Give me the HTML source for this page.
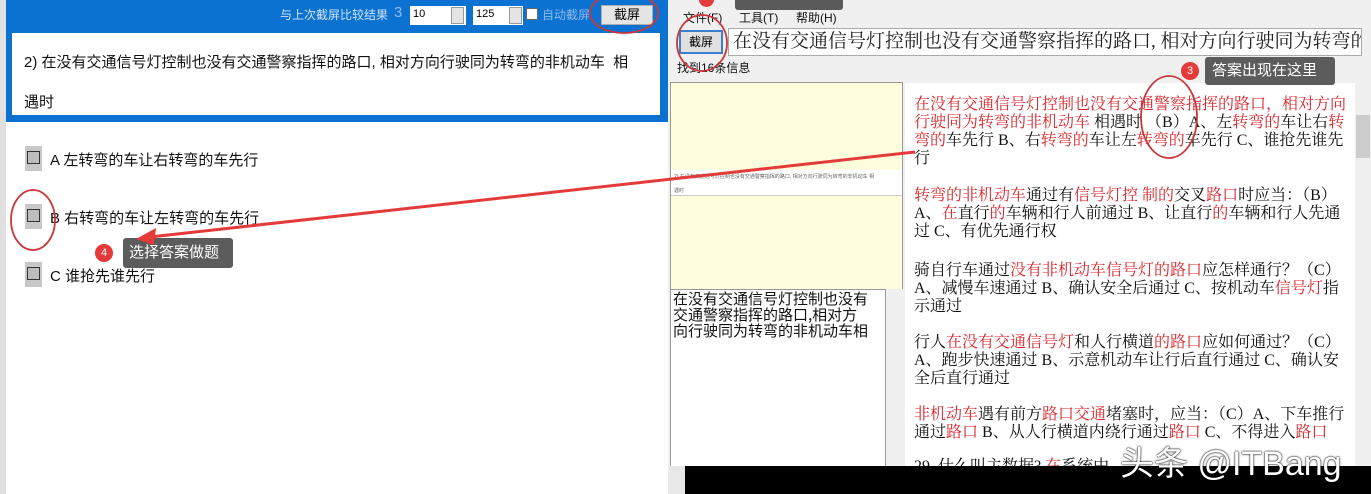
<!DOCTYPE html>
<html><head><meta charset="utf-8"><style>
*{margin:0;padding:0;box-sizing:border-box}
body{width:1371px;height:494px;position:relative;overflow:hidden;background:#fff;font-family:"Liberation Sans","Noto Sans CJK SC",sans-serif}
.a{position:absolute}
.cb{position:absolute;width:17px;height:25px;background:#c8c8c8}
.cb i{position:absolute;left:2px;top:5px;width:13px;height:13px;border:1.5px solid #333;background:#bdbdbd}
.opt{position:absolute;left:50px;font-size:15px;color:#111}
.r{color:#d8262c}
.res{position:absolute;left:914px;width:438px;font-family:"Liberation Serif","Noto Serif CJK SC",serif;font-size:16px;line-height:18px;color:#111}
</style></head><body>
<div class="a" style="left:0;top:0;width:6px;height:494px;background:#e0e0e0"></div>
<div class="a" style="left:6px;top:0;width:662px;height:122px;background:#0b72d2"></div>
<div class="a" style="left:280px;top:6px;font-size:12px;color:#cfe3f7">与上次截屏比较结果</div>
<div class="a" style="left:394px;top:4px;font-size:15px;color:#8fb8e6">3</div>
<div class="a" style="left:410px;top:6px;width:56px;height:19px;background:#fff;font-size:11px;padding:2px 3px">10</div>
<div class="a" style="left:451px;top:7px;width:13px;height:17px;background:#e4e4e4;border:1px solid #999"></div>
<div class="a" style="left:473px;top:6px;width:50px;height:19px;background:#fff;font-size:11px;padding:2px 3px">125</div>
<div class="a" style="left:509px;top:7px;width:13px;height:17px;background:#e4e4e4;border:1px solid #999"></div>
<div class="a" style="left:526px;top:8px;width:12px;height:12px;background:#fff;border:1px solid #666"></div>
<div class="a" style="left:542px;top:6px;font-size:12px;color:#8fb8e6">自动截屏</div>
<div class="a" style="left:601px;top:5px;width:52px;height:20px;background:#e5e5e5;border:1px solid #adadad;font-size:13px;text-align:center;line-height:18px">截屏</div>
<div class="a" style="left:12px;top:33px;width:648px;height:82px;background:#fff"></div>
<div class="a" style="left:24px;top:51px;font-size:15px;color:#111">2) 在没有交通信号灯控制也没有交通警察指挥的路口, 相对方向行驶同为转弯的非机动车&nbsp; 相</div>
<div class="a" style="left:24px;top:91px;font-size:15px;color:#111">遇时</div>
<div class="cb" style="left:25px;top:146px"><i></i></div><div class="opt" style="top:149px">A 左转弯的车让右转弯的车先行</div>
<div class="cb" style="left:25px;top:204px"><i></i></div><div class="opt" style="top:207px">B 右转弯的车让左转弯的车先行</div>
<div class="cb" style="left:25px;top:262px"><i></i></div><div class="opt" style="top:265px">C 谁抢先谁先行</div>
<div class="a" style="left:668px;top:0;width:703px;height:494px;background:#f0f0f0"></div>
<div class="a" style="left:683px;top:9px;font-size:12px;color:#111">文件(F)</div>
<div class="a" style="left:739px;top:9px;font-size:12px;color:#111">工具(T)</div>
<div class="a" style="left:796px;top:9px;font-size:12px;color:#111">帮助(H)</div>
<div class="a" style="left:679px;top:30px;width:44px;height:24px;background:#e1e1e1;border:2px solid #3c7fd0;font-size:12px;text-align:center;line-height:20px">截屏</div>
<div class="a" style="left:728px;top:28px;width:634px;height:28px;background:#fff;border:1px solid #aaa;font-family:'Liberation Serif','Noto Serif CJK SC',serif;font-size:19px;line-height:26px;padding-left:4px;white-space:nowrap;overflow:hidden;color:#222">在没有交通信号灯控制也没有交通警察指挥的路口, 相对方向行驶同为转弯的非</div>
<div class="a" style="left:677px;top:59px;font-size:12px;color:#111">找到16条信息</div>
<div class="a" style="left:670px;top:82px;width:233px;height:208px;background:#fefedc;border:1px solid #999"></div>
<div class="a" style="left:671px;top:170px;width:231px;height:26px;background:#fff;border-bottom:1px solid #ccc"></div>
<div class="a" style="left:674px;top:173px;font-size:5px;color:#666;white-space:nowrap">2) 在没有交通信号灯控制也没有交通警察指挥的路口, 相对方向行驶同为转弯的非机动车 相</div>
<div class="a" style="left:674px;top:187px;font-size:5px;color:#666">遇时</div>
<div class="a" style="left:670px;top:289px;width:216px;height:178px;background:#fff;border:1px solid #999;font-family:'Noto Sans CJK SC',sans-serif;font-size:15px;line-height:16px;padding:1px 14px 1px 2px;color:#111">在没有交通信号灯控制也没有交通警察指挥的路口,相对方向行驶同为转弯的非机动车相</div>
<div class="a" style="left:886px;top:289px;width:18px;height:178px;background:#f0f0f0"></div>
<div class="a" style="left:905px;top:83px;width:450px;height:384px;background:#fff"></div>
<div class="a" style="left:1355px;top:83px;width:16px;height:384px;background:#f0f0f0"></div>
<div class="a" style="left:1356px;top:115px;width:14px;height:43px;background:#cdcdcd"></div>
<div class="res" style="top:96px"><span class="r">在没有交通信号灯控制也没有交通警察指挥的路口，相对方向行驶同为转弯的非机动车</span> 相遇时 （B）A、左<span class="r">转弯的</span>车让右<span class="r">转弯的</span>车先行 B、右<span class="r">转弯的</span>车让左<span class="r">转弯的</span>车先行 C、谁抢先谁先行</div>
<div class="res" style="top:187px"><span class="r">转弯的非机动车</span>通过有<span class="r">信号灯控 制的</span>交叉<span class="r">路口</span>时应当：（B）A、<span class="r">在</span>直行<span class="r">的</span>车辆和行人前通过 B、让直行<span class="r">的</span>车辆和行人先通过 C、有优先通行权</div>
<div class="res" style="top:262px">骑自行车通过<span class="r">没有非机动车信号灯的路口</span>应怎样通行？（C）A、减慢车速通过 B、确认安全后通过 C、按机动车<span class="r">信号灯</span>指示通过</div>
<div class="res" style="top:334px">行人<span class="r">在没有交通信号灯</span>和人行横道<span class="r">的路口</span>应如何通过？（C）A、跑步快速通过 B、示意机动车让行后直行通过 C、确认安全后直行通过</div>
<div class="res" style="top:406px"><span class="r">非机动车</span>遇有前方<span class="r">路口交通</span>堵塞时，应当：（C）A、下车推行通过<span class="r">路口</span> B、从人行横道内绕行通过<span class="r">路口</span> C、不得进入<span class="r">路口</span></div>
<div class="res" style="top:458px">29. 什么叫主数据? <span class="r">在</span>系统中</div>
<div class="a" style="left:668px;top:466px;width:17px;height:28px;background:#e8e8e8"></div>
<div class="a" style="left:685px;top:466px;width:686px;height:28px;background:#000"></div>
<div class="a" style="left:1120px;top:436px;font-size:34px;color:#fff;text-shadow:0 0 2px #000,0 0 1px #000;white-space:nowrap">头条 @ITBang</div>
<div class="a" style="left:735px;top:-12px;width:108px;height:22px;background:#5a5a5a;border-radius:3px"></div>
<div class="a" style="left:699px;top:-8px;width:15px;height:15px;border-radius:50%;background:#e53a3a"></div>
<div class="a" style="left:1205px;top:57px;width:130px;height:28px;background:#5c5c5c;border-radius:3px;color:#fff;font-size:15px;line-height:28px;padding-left:7px">答案出现在这里</div>
<div class="a" style="left:1181px;top:62px;width:18px;height:18px;border-radius:50%;background:#e53a3a;color:#fff;font-size:11px;text-align:center;line-height:18px">3</div>
<div class="a" style="left:123px;top:238px;width:110px;height:30px;background:#5c5c5c;border-radius:3px;color:#fff;font-size:15px;line-height:30px;padding-left:6px">选择答案做题</div>
<div class="a" style="left:95px;top:244px;width:18px;height:18px;border-radius:50%;background:#e53a3a;color:#fff;font-size:11px;text-align:center;line-height:18px">4</div>
<svg class="a" style="left:0;top:0" width="1371" height="494">
<g fill="none" stroke="#c9373a" stroke-width="1.8">
<ellipse cx="624" cy="13" rx="34" ry="20"/>
<ellipse cx="702" cy="43" rx="25" ry="28"/>
<ellipse cx="1169" cy="117" rx="28" ry="41"/>
<ellipse cx="33" cy="220" rx="22" ry="30"/>
</g>
<line x1="915" y1="152" x2="150" y2="237" stroke="#e53a3a" stroke-width="3"/>
<polygon points="136,239 156,228 154,245" fill="#e53a3a"/>
</svg>
</body></html>
